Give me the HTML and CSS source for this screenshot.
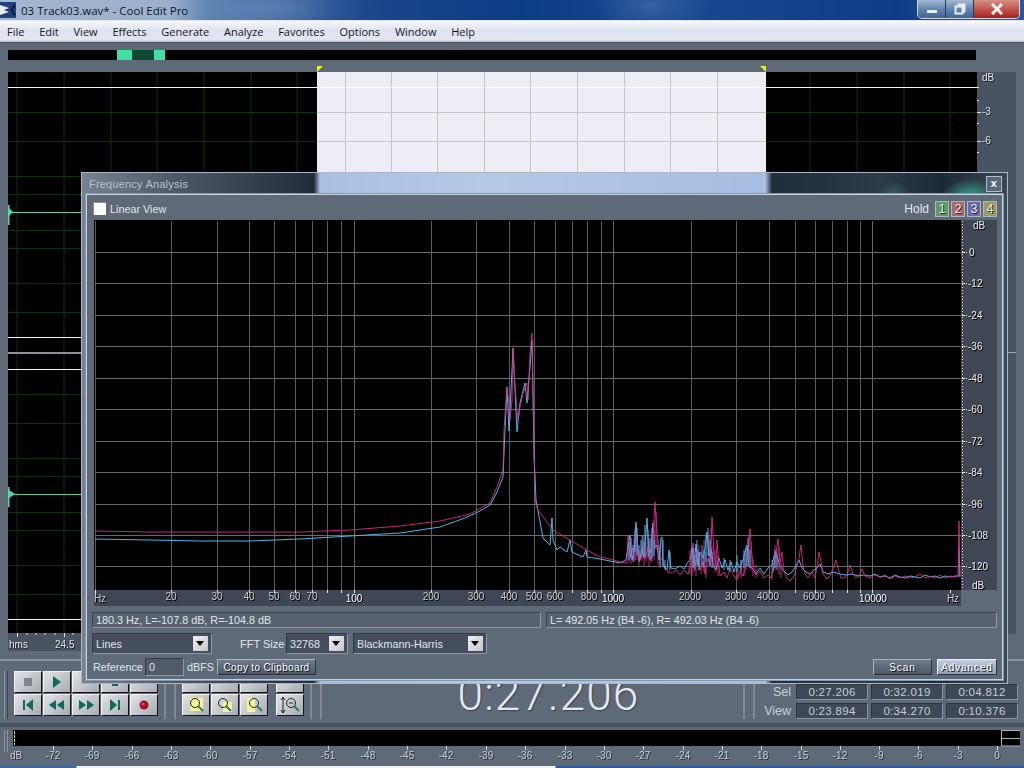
FILE: index.html
```html
<!DOCTYPE html>
<html lang="en">
<head>
  <meta charset="UTF-8" />
  <title>03 Track03.wav* - Cool Edit Pro</title>
  <link rel="stylesheet" href="styles.css">
</head>
<body>
<div class="app">
  <div class="titlebar">
    <svg class="app-icon" width="16" height="16" viewBox="0 0 16 16">
      <rect width="16" height="16" fill="#24407c"/>
      <path d="M0 3 L9 6 L4 8 L9 10 L0 13 Z" fill="#e8ecf4"/>
      <path d="M15 2 C10 4 10 12 15 14 L15 11 C12 10 12 6 15 5 Z" fill="#10182c"/>
    </svg>
    <span class="title-text">03 Track03.wav* - Cool Edit Pro</span>
    <div class="window-buttons">
      <div class="win-btn"><span class="win-min"></span></div>
      <div class="win-btn"><svg width="12" height="12" viewBox="0 0 12 12"><path d="M3.5 1.5h7v7h-2M1.5 3.5h7v7h-7z" fill="none" stroke="#e8eef6" stroke-width="2"/></svg></div>
      <div class="win-btn win-close"><svg width="12" height="12" viewBox="0 0 12 12"><path d="M1 1L11 11M11 1L1 11" stroke="#f4f4f4" stroke-width="3"/></svg></div>
    </div>
  </div>

  <div class="menubar">
    <span>File</span><span>Edit</span><span>View</span><span>Effects</span><span>Generate</span><span>Analyze</span><span>Favorites</span><span>Options</span><span>Window</span><span>Help</span>
  </div>

  <div class="workspace">
    <div class="overview"><div class="thumb"><div class="thumb-inner"></div></div></div>
    <svg class="wave" width="1008" height="591" viewBox="8 60 1008 591">
      <rect x="8" y="72" width="969" height="561" fill="#000"/>
      <rect x="317" y="72" width="449" height="280" fill="#ecedf5"/>
      <path d="M17 72V633M64 72V633M111 72V633M157 72V633M204 72V633M251 72V633M297 72V633M810 72V633M857 72V633M904 72V633M950 72V633" stroke="#0c3212" fill="none"/>
      <path d="M8 112.500H317M766 112.500H977M8 141.500H317M766 141.500H977M8 176.500H81M8 194.500H81M8 230.500H81M8 248.500H81M8 283.500H81M8 312.500H81M8 394.500H81M8 423.500H81M8 458.500H81M8 476.500H81M8 512.500H81M8 530.500H81M8 565.500H81M8 594.500H81" stroke="#0c3212" fill="none"/>
      <path d="M345.500 72V172M391.500 72V172M437.500 72V172M484.500 72V172M530.500 72V172M577.500 72V172M624.500 72V172M670.500 72V172M717.500 72V172M317 112.500H766M317 141.500H766" stroke="#c4c6c8" fill="none"/>
      <path d="M8 87.500H317M766 87.500H977M8 337.500H81M8 369.500H81M8 619.500H81" stroke="#f4f4f4" fill="none"/>
      <path d="M317 87.500H766" stroke="#fff" fill="none"/>
      <rect x="8" y="352" width="73" height="2" fill="#8b929c"/>
      <path d="M8 212.500H81M8 494.500H81" stroke="#5fc9a0" fill="none"/>
      <path d="M8.500 205V225M8.500 487V507" stroke="#4fdca4" stroke-width="2" fill="none"/>
      <path d="M9 208L13 212L9 216ZM9 490L15 494L9 498Z" fill="#4fdca4"/>
      <path d="M317 66H323L317 72Z M766 66H760L766 72Z" fill="#f0ee20"/>
      <rect x="977" y="72" width="39" height="562" fill="#4a5362"/>
      <path d="M977 112.500H981M977 141.500H981M977 87.500H979M977 100.500H979M977 123.500H979M977 152.500H979" stroke="#dde" fill="none"/>
      <g class="scale-text">
        <text x="982" y="81">dB</text>
        <text x="982" y="115">-3</text>
        <text x="982" y="144">-6</text>
      </g>
      <rect x="8" y="633" width="969" height="18" fill="#4a5362"/>
      <path d="M17.500 633V637M64.500 633V637M27 633V635M36 633V635M45 633V635M55 633V635M73 633V635" stroke="#dde" fill="none"/>
      <g class="scale-text"><text x="9" y="648">hms</text><text x="55" y="648">24.5</text></g>
      <path d="M977 352.500H1016" stroke="#9aa3af"/>
    </svg>
  </div>

  <div class="transport">
    <div class="grip grip-first"></div>
    <div class="btn-grid five">
      <div class="tbtn"><svg width="12" height="12"><rect x="2" y="2" width="8" height="8" fill="#80858c"/></svg></div>
      <div class="tbtn"><svg width="12" height="14"><path d="M2 1L10 7L2 13Z" fill="#0f6a5a"/></svg></div>
      <div class="tbtn"></div>
      <div class="tbtn"><svg width="12" height="12"><path d="M3 7h6v3H3z" fill="#0f6a5a"/></svg></div>
      <div class="tbtn"></div>
      <div class="tbtn"><svg width="14" height="14"><path d="M2 2h2v10H2zM12 1v12L5 7z" fill="#0f6a5a"/></svg></div>
      <div class="tbtn"><svg width="18" height="12"><path d="M8 1v10L1 6zM16 1v10L9 6z" fill="#0f6a5a"/></svg></div>
      <div class="tbtn"><svg width="18" height="12"><path d="M2 1v10l7-5zM10 1v10l7-5z" fill="#0f6a5a"/></svg></div>
      <div class="tbtn"><svg width="14" height="14"><path d="M2 1v12l7-6zM10 2h2v10h-2z" fill="#0f6a5a"/></svg></div>
      <div class="tbtn"><svg width="12" height="12"><circle cx="6" cy="6" r="4.500" fill="#a8101c"/><circle cx="5" cy="5" r="1.500" fill="#d8505a"/></svg></div>
    </div>
    <div class="grip grip-mid"></div>
    <div class="btn-grid three">
      <div class="tbtn"></div><div class="tbtn"></div><div class="tbtn"></div>
      <div class="tbtn">
        <svg width="20" height="20"><rect x="4" y="3" width="13" height="13" fill="#f6f49a"/><circle cx="9" cy="8" r="4.500" fill="none" stroke="#222"/><path d="M12 11l5 5" stroke="#2a7a64" stroke-width="2"/></svg>
      </div>
      <div class="tbtn">
        <svg width="20" height="20"><rect x="8" y="7" width="9" height="10" fill="#f6f49a"/><circle cx="8" cy="8" r="4.500" fill="none" stroke="#222"/><path d="M11 11l5 5" stroke="#2a7a64" stroke-width="2"/></svg>
      </div>
      <div class="tbtn">
        <svg width="20" height="20"><rect x="3" y="3" width="8" height="14" fill="#f6f49a"/><circle cx="10" cy="8" r="4.500" fill="none" stroke="#222"/><path d="M13 11l5 5" stroke="#2a7a64" stroke-width="2"/></svg>
      </div>
    </div>
    <div class="btn-grid one">
      <div class="tbtn"></div>
      <div class="tbtn">
        <svg width="22" height="20"><path d="M4 2v16M2 5l2-3 2 3M2 15l2 3 2-3" fill="none" stroke="#222"/><circle cx="12" cy="8" r="4.500" fill="none" stroke="#222"/><path d="M10 8h4" stroke="#222"/><path d="M15 11l5 5" stroke="#2a7a64" stroke-width="2"/></svg>
      </div>
    </div>
    <div class="grip grip-mid"></div>
    <div class="time">0:27.206</div>
    <div class="grip grip-mid"></div>
    <div class="info">
      <div class="info-row"><span class="info-label">Sel</span><span class="info-field">0:27.206</span><span class="info-field">0:32.019</span><span class="info-field">0:04.812</span></div>
      <div class="info-row"><span class="info-label">View</span><span class="info-field">0:23.894</span><span class="info-field">0:34.270</span><span class="info-field">0:10.376</span></div>
    </div>
  </div>

  <div class="meter">
    <svg width="1024" height="39" viewBox="0 727 1024 39">
      <path d="M4.500 730V752M7.500 730V752" stroke="#8e96a2" fill="none"/>
      <rect x="13" y="730" width="1007" height="16" fill="#000"/>
      <path d="M14.500 731V745" stroke="#f0ee20" stroke-dasharray="3 1"/>
      <path d="M1001.500 730V746H1020M1001 738.500H1020M1001 730.500H1020" stroke="#a8b0ba" fill="none"/>
      <path d="M53.500 746V750M92.500 746V750M132.500 746V750M171.500 746V750M210.500 746V750M250.500 746V750M289.500 746V750M328.500 746V750M368.500 746V750M407.500 746V750M446.500 746V750M486.500 746V750M525.500 746V750M565.500 746V750M604.500 746V750M643.500 746V750M683.500 746V750M722.500 746V750M761.500 746V750M801.500 746V750M840.500 746V750M879.500 746V750M918.500 746V750M958.500 746V750M997.500 746V750" stroke="#cfd4da" fill="none"/>
      <g class="meter-text">
        <text x="16" y="759">dB</text><text x="53" y="759">-72</text><text x="92" y="759">-69</text><text x="132" y="759">-66</text><text x="171" y="759">-63</text><text x="210" y="759">-60</text><text x="250" y="759">-57</text><text x="289" y="759">-54</text><text x="328" y="759">-51</text><text x="368" y="759">-48</text><text x="407" y="759">-45</text><text x="446" y="759">-42</text><text x="486" y="759">-39</text><text x="525" y="759">-36</text><text x="565" y="759">-33</text><text x="604" y="759">-30</text><text x="643" y="759">-27</text><text x="683" y="759">-24</text><text x="722" y="759">-21</text><text x="761" y="759">-18</text><text x="801" y="759">-15</text><text x="840" y="759">-12</text><text x="879" y="759">-9</text><text x="918" y="759">-6</text><text x="958" y="759">-3</text><text x="997" y="759">0</text>
      </g>
    </svg>
  </div>
  <div class="footer-strip"></div>

  <div class="dialog">
    <div class="dialog-title">
      <span>Frequency Analysis</span>
      <div class="dialog-close">x</div>
    </div>
    <div class="dialog-panel">
      <div class="row-top">
        <span class="checkbox"></span>
        <span class="linear-label">Linear View</span>
        <span class="hold-label">Hold</span>
        <div class="hold hold-1">1</div>
        <div class="hold hold-2">2</div>
        <div class="hold hold-3">3</div>
        <div class="hold hold-4">4</div>
      </div>

      <svg class="plot" width="903" height="386" viewBox="94 220 903 386">
        <rect x="94" y="220" width="867" height="370" fill="#000"/>
        <rect x="961" y="220" width="36" height="370" fill="#3f4755"/>
        <rect x="94" y="590" width="867" height="16" fill="#3f4755"/>
        <path d="M95.500 221V590M171.500 221V590M217.500 221V590M249.500 221V590M274.500 221V590M295.500 221V590M312.500 221V590M327.500 221V590M341.500 221V590M431.500 221V590M476.500 221V590M509.500 221V590M534.500 221V590M555.500 221V590M572.500 221V590M587.500 221V590M601.500 221V590M691.500 221V590M736.500 221V590M769.500 221V590M795.500 221V590M815.500 221V590M832.500 221V590M847.500 221V590M860.500 221V590" stroke="#5c5c5c" fill="none"/>
        <path d="M354.500 221V590M613.500 221V590M872.500 221V590M95 252.500H961M95 283.500H961M95 315.500H961M95 346.500H961M95 378.500H961M95 409.500H961M95 441.500H961M95 472.500H961M95 504.500H961M95 535.500H961M95 566.500H961" stroke="#6a6a6a" fill="none"/>
        <polyline class="trace-r" points="95,539 150,540 200,541 250,541 300,539 350,536 400,533 440,527 465,518 480,511 490,505 497,492 503,477 505,430 507,387 509,431 512,370 513,348 517,432 520,403 525,383 527,403 530,367 532,340 534,453 536,500 543,538 550,545 552,518 553,540 557,550 560,547 567,552 570,540 572,552 583,557 586,550 587,557 600,559 610,561 620,563 626,560 628,545 630,535 632,560 634,552 636,522 638,550 640,560 642,548 644,558 647,518 649,556 651,550 653,523 655,548 657,545 659,560 661,538 662,537 663,566 667,570 669,550 671,568 675,569 680,566 684,569 688,562 690,560 692,548 694,566 696,544 698,566 700,552 703,558 705,548 707,532 709,556 711,548 713,564 716,570 719,558 722,568 725,560 728,570 731,562 734,572 737,562 740,568 743,560 745,552 747,545 749,566 752,568 756,574 760,568 764,574 768,568 772,565 774,556 776,552 778,560 780,566 783,570 788,575 792,572 796,566 799,560 802,568 806,572 810,574 814,570 817,568 820,564 823,572 828,574 834,572 840,574 846,575 852,574 858,576 864,575 870,576 875,574 880,577 885,576 890,578 895,575 900,577 905,578 910,576 915,577 920,578 925,575 930,577 935,576 940,578 945,576 950,577 955,576 959,576 959,550 960,577"/>
        <polyline class="trace-l" points="95,531 150,532 200,532 250,532 300,532 350,530 400,526 440,521 470,514 490,503 497,487 503,470 504,430 505,415 507,387 509,405 510,420 512,400 513,348 515,387 518,420 520,407 523,393 527,383 528,400 530,353 532,333 533,387 534,453 535,500 538,510 553,530 570,540 587,550 600,557 610,559 620,562 627,563 628,536 630,557 633,548 635,560 636,530 638,553 640,561 643,541 645,559 648,547 651,561 653,536 655,502 657,531 659,556 662,560 665,566 668,572 672,573 676,570 680,575 684,570 688,574 691,562 693,543 695,566 698,550 700,570 703,562 705,574 708,558 710,565 712,517 714,552 716,566 717,540 719,566 720,576 724,572 727,578 730,568 733,574 736,579 740,572 743,576 746,566 748,552 750,529 752,556 754,570 757,575 760,571 764,578 768,575 771,578 774,566 776,553 778,539 780,562 782,552 784,572 787,578 790,581 794,576 797,566 799,558 801,545 803,566 805,574 808,578 812,572 815,578 817,566 819,552 821,562 823,574 827,579 830,576 834,566 836,560 838,568 841,578 845,578 848,572 850,565 853,574 856,578 860,574 862,569 865,576 870,578 875,575 880,577 885,575 890,579 895,576 900,578 905,576 910,578 915,577 920,574 925,578 930,576 935,578 940,575 945,578 950,576 955,577 958,576 959,521 960,577"/>
        <path class="trace-l" d="M629 540V562M631 550V564M634 538V562M637 545V560M639 550V566M642 535V560M644 548V566M646 542V562M649 540V566M652 530V562M654 520V560M656 512V550M658 540V565M660 550V568M690 550V574M692 555V576M694 548V572M696 560V576M699 545V570M701 552V574M704 540V572M706 552V578M709 535V566M711 528V560M713 545V568M715 550V572M718 555V576M738 565V580M741 560V578M744 555V576M746 548V570M749 535V562M751 542V570M753 560V576M756 565V578M772 560V580M775 545V570M777 550V566M779 548V574M781 560V578"/>
        <path class="trace-r" d="M629 542V560M631 538V558M633 545V562M635 530V552M637 528V556M639 545V562M641 540V558M643 535V556M645 525V556M648 530V558M650 538V560M652 528V558M654 540V556M660 545V566M663 540V566M665 560V570M670 552V570M693 548V568M695 555V570M697 540V565M699 552V570M702 545V566M704 550V568M706 535V562M708 528V556M710 540V566M712 552V568M724 558V570M730 560V572M737 555V572M741 560V572M744 550V568M746 548V566M748 538V566M750 550V568M773 560V572M775 550V568M777 555V570"/>
        <path d="M962.500 221V590" stroke="#e8e8e8" stroke-dasharray="1 2"/>
        <path d="M962 252.500H967M962 283.500H967M962 315.500H967M962 346.500H967M962 378.500H967M962 409.500H967M962 441.500H967M962 472.500H967M962 504.500H967M962 535.500H967M962 566.500H967" stroke="#e8e8e8" stroke-dasharray="3 1" fill="none"/>
        <path d="M95.500 590V595M171.500 590V593M217.500 590V593M249.500 590V593M274.500 590V593M295.500 590V593M312.500 590V593M327.500 590V593M341.500 590V593M354.500 590V593M431.500 590V593M476.500 590V593M509.500 590V593M534.500 590V593M555.500 590V593M572.500 590V593M587.500 590V593M601.500 590V593M613.500 590V593M691.500 590V593M736.500 590V593M769.500 590V593M795.500 590V593M815.500 590V593M832.500 590V593M847.500 590V593M860.500 590V593M872.500 590V593M950.500 590V593" stroke="#e8e8e8" fill="none"/>
        <g class="plot-text">
          <text x="973" y="229">dB</text><text x="969" y="256">0</text><text x="968" y="287">-12</text><text x="968" y="319">-24</text><text x="968" y="350">-36</text><text x="968" y="382">-48</text><text x="968" y="413">-60</text><text x="968" y="445">-72</text><text x="968" y="476">-84</text><text x="968" y="508">-96</text><text x="968" y="539">-108</text><text x="968" y="570">-120</text><text x="972" y="589">dB</text>
        </g>
        <g class="plot-text plot-x">
          <text x="100" y="602">Hz</text><text x="171" y="600">20</text><text x="217" y="600">30</text><text x="249" y="600">40</text><text x="274" y="600">50</text><text x="295" y="600">60</text><text x="312" y="600">70</text><text class="decade" x="354" y="602">100</text><text x="431" y="600">200</text><text x="476" y="600">300</text><text x="509" y="600">400</text><text x="534" y="600">500</text><text x="555" y="600">600</text><text x="589" y="600">800</text><text class="decade" x="613" y="602">1000</text><text x="690" y="600">2000</text><text x="736" y="600">3000</text><text x="768" y="600">4000</text><text x="814" y="600">6000</text><text class="decade" x="873" y="602">10000</text><text x="953" y="602">Hz</text>
        </g>
      </svg>

      <div class="status-row">
        <div class="status status-left">180.3 Hz, L=-107.8 dB, R=-104.8 dB</div>
        <div class="status status-right">L= 492.05 Hz (B4 -6), R= 492.03 Hz (B4 -6)</div>
      </div>

      <div class="select-row">
        <div class="select select-type"><span>Lines</span><span class="drop"></span></div>
        <label class="fft-label">FFT Size</label>
        <div class="select select-fft"><span>32768</span><span class="drop"></span></div>
        <div class="select select-window"><span>Blackmann-Harris</span><span class="drop"></span></div>
      </div>

      <div class="action-row">
        <label class="ref-label">Reference</label>
        <div class="ref-input">0</div>
        <label class="dbfs-label">dBFS</label>
        <div class="btn btn-copy">Copy to Clipboard</div>
        <div class="btn btn-scan">Scan</div>
        <div class="btn btn-advanced">Advanced</div>
      </div>
    </div>
  </div>
</div>
</body>
</html>
```

FILE: styles.css
```css
html, body {
  margin: 0;
  padding: 0;
  overflow: hidden;
}
body {
  font-family: "Liberation Sans", Arial, sans-serif;
  background: #5f6a79;
}
svg {
  display: block;
}
.app {
  position: relative;
  width: 1024px;
  height: 768px;
  overflow: hidden;
  display: flex;
  flex-direction: column;
  background: #5f6a79;
}

/* title + menu */
.titlebar {
  height: 20px;
  flex: none;
  display: flex;
  align-items: center;
  padding-left: 0;
  border-bottom: 1px solid #dfe6f0;
  background:
    radial-gradient(ellipse 60px 26px at 650px 6px, rgba(120,150,200,.35), transparent),
    radial-gradient(ellipse 90px 30px at 280px 8px, rgba(150,175,215,.35), transparent),
    linear-gradient(90deg, #a3b6cf 0, #9cb0cb 170px, #5b80b0 210px, #1f4a8c 330px, #0b3c86 520px, #17488f 700px, #0d3d88 900px, #2d5899 1024px);
}
.app-icon {
  margin-right: 5px;
}
.title-text {
  font-family: "Open Sans", sans-serif;
  font-size: 11.5px;
  color: #0b1a2e;
}
.window-buttons {
  display: flex;
  height: 18px;
  margin-left: auto;
  margin-right: 4px;
  align-self: flex-start;
  border: 1px solid #cfd8e6;
  border-top: none;
  border-radius: 0 0 5px 5px;
  overflow: hidden;
}
.win-btn {
  width: 27px;
  display: flex;
  align-items: center;
  justify-content: center;
  background: linear-gradient(#a5b6cf, #5f80ac 55%, #3f659c);
  border-right: 1px solid #223a5f;
}
.win-min {
  width: 10px;
  height: 3px;
  margin-top: 4px;
  background: #e8eef6;
}
.win-close {
  width: 45px;
  border-right: none;
  background: linear-gradient(#d49184, #c05048 55%, #a41f20);
}
.menubar {
  height: 21px;
  flex: none;
  display: flex;
  align-items: center;
  gap: 14.8px;
  padding-left: 7px;
  font-family: "Open Sans", sans-serif;
  font-size: 11px;
  color: #14181e;
  background: linear-gradient(#f6f7fb, #dfe3ef 45%, #e2e6f1 90%, #b8bcc4);
}
.workspace {
  height: 619px;
  flex: none;
  box-sizing: border-box;
  padding: 7px 0 0 8px;
  border-top: 1px solid #4b5460;
  border-bottom: 2px solid #8a929e;
}
.overview {
  width: 968px;
  height: 10px;
  background: #000;
  display: flex;
}
.thumb {
  margin-left: 109px;
  width: 48px;
  background: #3fe0a0;
  padding: 0 11px 0 15px;
  box-sizing: border-box;
}
.thumb-inner {
  height: 100%;
  background: #0d4a34;
}
.scale-text {
  fill: #e2e6ea;
  font-size: 10px;
  filter: drop-shadow(1px 1px 0 #1c2028);
}

/* transport row */
.transport {
  height: 66px;
  flex: none;
  display: flex;
  box-sizing: border-box;
  padding-top: 10px;
  border-bottom: 4px solid #4a5260;
}
.grip {
  flex: none;
  box-sizing: border-box;
  width: 4px;
  margin-bottom: 4px;
  border-left: 1px solid #8e96a2;
  border-right: 1px solid #3f4652;
}
.grip-first {
  margin-left: 4px;
  margin-right: 6px;
}
.grip-mid {
  width: 12px;
  margin: 0 6px 4px;
  border-left: 2px solid #808894;
  border-right: 2px solid #808894;
  background: #5f6a79;
}
.btn-grid {
  display: grid;
  grid-auto-rows: 22px;
  gap: 1px;
  flex: none;
}
.five { grid-template-columns: repeat(5, 28px); }
.three { grid-template-columns: repeat(3, 28px); }
.one { grid-template-columns: 28px; margin-left: 8px; }
.tbtn {
  display: flex;
  align-items: center;
  justify-content: center;
  box-sizing: border-box;
  background: linear-gradient(135deg, #e2e4e6, #a8acb2);
  border-top: 1px solid #f4f4f4;
  border-left: 1px solid #f4f4f4;
  border-right: 1px solid #12161c;
  border-bottom: 1px solid #12161c;
}
.time {
  flex: 1;
  text-align: center;
  padding-left: 32px;
  font-family: Roboto, "Liberation Sans", sans-serif;
  font-weight: 300;
  font-size: 46px;
  line-height: 46px;
  letter-spacing: 1px;
  color: #e6e9ed;
  text-shadow: 1px 1px 1px #3a424e;
}
.info {
  flex: none;
  display: flex;
  flex-direction: column;
  justify-content: flex-end;
  gap: 3px;
  padding-bottom: 4px;
  margin-right: 6px;
}
.info-row {
  display: flex;
  gap: 3px;
  align-items: center;
}
.info-label {
  width: 30px;
  text-align: right;
  margin-right: 2px;
  font-size: 12.5px;
  color: #c8ced6;
}
.info-field {
  box-sizing: border-box;
  width: 72px;
  height: 16px;
  line-height: 14px;
  text-align: center;
  font-size: 11.5px;
  letter-spacing: .3px;
  color: #c6ccd4;
  background: #3f4856;
  border-top: 1px solid #2e3540;
  border-left: 1px solid #2e3540;
  border-right: 1px solid #8a94a2;
  border-bottom: 1px solid #8a94a2;
}

/* level meter */
.meter {
  height: 39px;
  flex: none;
}
.meter-text {
  fill: #c9ced5;
  font-size: 10px;
  text-anchor: middle;
  filter: drop-shadow(1px 1px 0 #2a303a);
}
.footer-strip {
  height: 2px;
  flex: none;
  background: linear-gradient(90deg, #3a66a0 0, #3a66a0 76px, #f0f2f6 77px, #f0f2f6 555px, #2c5a98 556px);
}

/* frequency analysis dialog floats over the main window */
.dialog {
  position: absolute;
  left: 81px;
  top: 172px;
  width: 927px;
  height: 512px;
  box-sizing: border-box;
  padding: 0 4px 3px 4px;
  display: flex;
  flex-direction: column;
  border: 1px solid #aab6c4;
  background:
    radial-gradient(ellipse 28px 16px at 888px 22px, rgba(60,190,160,.75), transparent),
    radial-gradient(ellipse 16px 14px at 812px 22px, rgba(60,160,150,.4), transparent),
    linear-gradient(90deg, #76828f 0, #4e5a68 90px, #2a3644 200px, #1f2c3a 232px, #a9c0e3 238px, #b5c9e8 400px, #a6bde2 680px, #b0c4e6 683px, #1f2e3b 690px, #2c3b48 800px, #1c2a36 860px, #3b4955 927px);
}
.dialog-title {
  height: 21px;
  flex: none;
  display: flex;
  align-items: center;
  justify-content: space-between;
  font-size: 11px;
  letter-spacing: .2px;
  color: #b9c0c8;
  padding-left: 3px;
}
.dialog-close {
  width: 14px;
  height: 14px;
  margin-right: 1px;
  line-height: 12px;
  text-align: center;
  font-size: 11px;
  font-weight: bold;
  color: #fff;
  background: #5b6674;
  border: 1px solid #b4bdc9;
}
.dialog-panel {
  flex: 1;
  box-sizing: border-box;
  padding: 0 5px 0 7px;
  display: flex;
  flex-direction: column;
  background: #5f6a79;
  border: 1px solid #c8d2de;
  box-shadow: 0 0 0 1px #8798ae;
  color: #e1e5ea;
  font-size: 10.8px;
}
.row-top {
  height: 25px;
  box-sizing: border-box;
  padding-top: 2px;
  flex: none;
  display: flex;
  align-items: center;
}
.checkbox {
  width: 12px;
  height: 12px;
  margin-left: -1px;
  background: #fff;
  border-top: 1px solid #8a929e;
  border-left: 1px solid #8a929e;
}
.linear-label {
  margin-left: 4px;
}
.hold-label {
  margin-left: auto;
  margin-right: 4px;
  font-size: 12px;
}
.hold {
  box-sizing: border-box;
  width: 14px;
  height: 16px;
  margin-left: 2px;
  line-height: 14px;
  text-align: center;
  font-size: 12px;
  color: #eee;
  text-shadow: 1px 1px 0 #222;
  border: 1px solid #aeb6c0;
}
.hold-1 { background: #5d9c62; }
.hold-2 { background: #a86a6a; }
.hold-3 { background: #6a6ab0; }
.hold-4 { background: #9a9a62; }
.plot {
  flex: none;
}
.trace-r {
  fill: none;
  stroke: #4fb4e4;
  stroke-width: 1;
}
.trace-l {
  fill: none;
  stroke: #e42e8e;
  stroke-width: 1;
  opacity: .85;
}
.plot-text {
  fill: #eceef0;
  font-size: 10px;
  filter: drop-shadow(1px 1px 0 #000);
}
.plot-x {
  text-anchor: middle;
  fill: #c8cdd3;
}
.plot-x .decade {
  fill: #fff;
}
.status-row {
  display: flex;
  gap: 5px;
  margin-top: 6px;
  margin-left: -2px;
  flex: none;
}
.status {
  box-sizing: border-box;
  height: 16px;
  line-height: 14px;
  padding-left: 3px;
  background: #59636f;
  border-top: 1px solid #3a424e;
  border-left: 1px solid #3a424e;
  border-right: 1px solid #8e98a6;
  border-bottom: 1px solid #8e98a6;
  white-space: nowrap;
}
.status-left { width: 449px; }
.status-right { width: 451px; }
.select-row {
  display: flex;
  align-items: center;
  height: 21px;
  margin-top: 5px;
  margin-left: -2px;
  flex: none;
}
.select {
  box-sizing: border-box;
  height: 21px;
  display: flex;
  align-items: center;
  justify-content: space-between;
  padding: 0 3px 0 3px;
  background: #454e5c;
  border-top: 1px solid #343b46;
  border-left: 1px solid #343b46;
  border-right: 1px solid #8e98a6;
  border-bottom: 1px solid #8e98a6;
}
.select-type { width: 120px; }
.select-fft { width: 62px; }
.select-window { width: 134px; margin-left: 5px; }
.fft-label {
  margin-left: 28px;
  width: 46px;
  white-space: nowrap;
  font-size: 11px;
}
.drop {
  position: relative;
  width: 15px;
  height: 15px;
  background: linear-gradient(135deg, #f0f0f0, #c4c6ca);
}
.drop::after {
  content: "";
  position: absolute;
  left: 3px;
  top: 5px;
  border-left: 4px solid transparent;
  border-right: 4px solid transparent;
  border-top: 5px solid #000;
}
.action-row {
  display: flex;
  align-items: center;
  height: 20px;
  margin-top: 3px;
  margin-left: -1px;
  flex: none;
}
.ref-label {
  width: 52px;
}
.ref-input {
  box-sizing: border-box;
  width: 39px;
  height: 18px;
  line-height: 16px;
  padding-left: 3px;
  background: #505a68;
  border-top: 1px solid #343b46;
  border-left: 1px solid #343b46;
  border-right: 1px solid #8e98a6;
  border-bottom: 1px solid #8e98a6;
}
.dbfs-label {
  margin-left: 3px;
  width: 30px;
}
.btn {
  box-sizing: border-box;
  height: 16px;
  line-height: 15px;
  text-align: center;
  font-size: 10px;
  letter-spacing: .9px;
  color: #fff;
  text-shadow: 1px 1px 0 #111;
  background: linear-gradient(#6f7b8b, #4f5a69);
  border-top: 1px solid #aab4c0;
  border-left: 1px solid #aab4c0;
  border-right: 1px solid #2e3540;
  border-bottom: 1px solid #2e3540;
}
.btn-copy { width: 99px; letter-spacing: .35px; }
.btn-scan { width: 59px; margin-left: auto; }
.btn-advanced {
  width: 60px;
  margin-left: 5px;
  background: linear-gradient(#c4cee2, #8d9cb8);
  border-top-color: #eef1f6;
  border-left-color: #eef1f6;
}
```
